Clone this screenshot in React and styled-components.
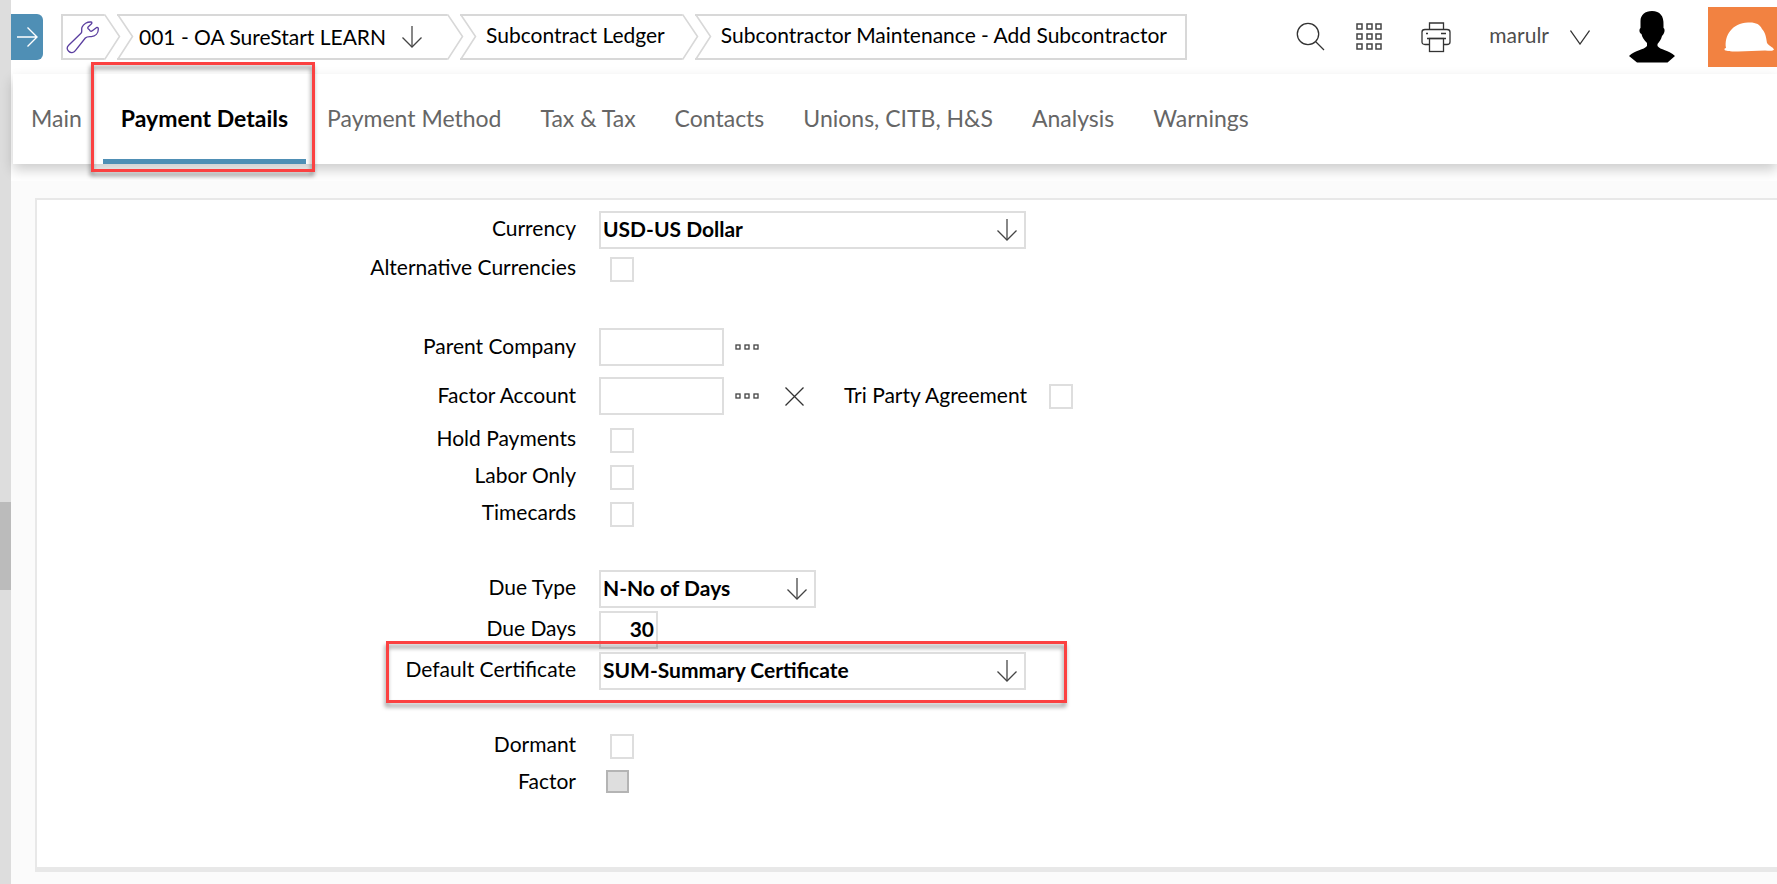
import React from "react";
import styled, { createGlobalStyle, css } from "styled-components";

const GlobalStyle = createGlobalStyle`
  *, *::before, *::after { box-sizing: border-box; }
  body {
    margin: 0;
    background: #fff;
    color: #000;
    font-family: Lato, "Liberation Sans", sans-serif;
    font-size: 21px;
    line-height: 26px;
    overflow-x: hidden;
  }
  button, input, select { font: inherit; color: inherit; }
`;

const Page = styled.div`
  display: flex;
  min-height: 100vh;
`;

const Rail = styled.aside`
  flex: none;
  width: 11px;
  padding-top: 502px;
  background: #ddd;
`;

const RailThumb = styled.div`
  height: 88px;
  background: #bbb;
`;

const Main = styled.div`
  flex: 1;
  min-width: 0;
  display: flex;
  flex-direction: column;
`;

const Header = styled.header`
  display: flex;
  justify-content: space-between;
  height: 74px;
`;

const HeaderLeft = styled.div`
  display: flex;
  align-items: flex-start;
  gap: 18px;
  padding-top: 14px;
`;

const IconButton = styled.button`
  display: flex;
  align-items: center;
  padding: 0;
  border: 0;
  background: none;
`;

const ExpandButton = styled(IconButton)`
  justify-content: center;
  width: 32px;
  height: 46px;
  border-radius: 0 6px 6px 0;
  background: #4f8fb5;
`;

const Crumbs = styled.nav`
  display: flex;
`;

const Crumb = styled.div`
  display: flex;
  height: 46px;
  & + & { margin-left: -4px; }
`;

const CrumbBody = styled.a`
  display: flex;
  align-items: center;
  gap: 16px;
  padding: ${(p) => p.$padding};
  border: 2px solid #d8d8d8;
  border-left-width: ${(p) => (p.$first ? "2px" : 0)};
  border-right-width: ${(p) => (p.$last ? "2px" : 0)};
  color: #000;
  text-decoration: none;
  white-space: nowrap;
`;

const HeaderRight = styled.div`
  display: flex;
  align-items: center;
  height: 74px;
`;

const Tools = styled.div`
  display: flex;
  align-items: center;
  gap: 38px;
  padding-right: 39px;
`;

const ToolPair = styled.div`
  display: flex;
  align-items: center;
  gap: 31px;
  padding-bottom: 1px;
`;

const UserButton = styled(IconButton)`
  gap: 21px;
  color: #4d4d4d;
`;

const UserName = styled.span`
  padding-bottom: 4px;
`;

const Avatar = styled.div`
  display: flex;
  padding-right: 33px;
`;

const Brand = styled.div`
  display: flex;
  align-items: center;
  width: 69px;
  height: 60px;
  padding-left: 16px;
  background: #f28241;
`;

const TabStrip = styled.div`
  padding: 0 0 17px 2px;
`;

const Tabs = styled.nav`
  display: flex;
  gap: 3px;
  height: 90px;
  background: #fff;
  box-shadow: 0 6px 12px rgba(0, 0, 0, 0.2);
`;

const Tab = styled.a`
  position: relative;
  padding: 30px 18px 0;
  border-bottom: 5px solid ${(p) => (p.$active ? "#4f8fb5" : "transparent")};
  color: ${(p) => (p.$active ? "#000" : "#666")};
  font-size: 23px;
  line-height: 28px;
  font-weight: ${(p) => (p.$active ? 700 : 400)};
  text-decoration: none;
  white-space: nowrap;
`;

const Highlight = styled.span`
  position: absolute;
  z-index: 2;
  border: 3px solid #fb4141;
  filter: drop-shadow(-1px 4px 2px rgba(0, 0, 0, 0.4));
  pointer-events: none;
  ${(p) =>
    p.$on === "tab"
      ? css`inset: -12px -9px -13px -12px;`
      : css`top: -11px; bottom: -13px; left: 349px; width: 681px;`}
`;

const Content = styled.main`
  flex: 1;
  display: flex;
  padding: 17px 0 12px 24px;
  background: #fbfbfb;
`;

const Panel = styled.form`
  flex: 1;
  display: flex;
  flex-direction: column;
  gap: 39px;
  padding: 11px 0 20px;
  border: 2px solid #e8e8e8;
  border-width: 2px 0 5px 2px;
  background: #fff;
`;

const Group = styled.div`
  display: flex;
  flex-direction: column;
  gap: 3px;
`;

const Label = styled.label`
  padding-bottom: 4px;
  text-align: right;
  white-space: nowrap;
`;

const rowKinds = {
  field: css`height: 38px;`,
  check: css`height: 34px;`,
  lookup: css`
    height: 46px;
    padding-bottom: 2px;
    ${Label} { padding-bottom: 2px; }
  `,
};

const Row = styled.div`
  position: relative;
  display: grid;
  grid-template-columns: 539px 1fr;
  column-gap: 23px;
  align-items: center;
  ${(p) => rowKinds[p.$kind]}
`;

const Controls = styled.div`
  display: flex;
  align-items: center;
`;

const SelectBox = styled.div`
  display: grid;
  align-items: center;
  width: ${(p) => (p.$wide ? "427px" : "217px")};
  & > * { grid-area: 1 / 1; }
  svg { justify-self: end; margin-right: 9px; pointer-events: none; }
`;

const Select = styled.select`
  appearance: none;
  width: 100%;
  height: 38px;
  padding: 0 40px 2px 2px;
  border: 2px solid #dedede;
  border-radius: 0;
  background: #fff;
  font-weight: 700;
`;

const TextInput = styled.input`
  width: ${(p) => (p.$short ? "59px" : "125px")};
  height: 38px;
  padding: 0 2px 3px;
  border: 2px solid #dedede;
  background: #fff;
  font-weight: 700;
  text-align: ${(p) => (p.$short ? "right" : "left")};
`;

const Checkbox = styled.input`
  appearance: none;
  width: 24px;
  height: 25px;
  margin: 0 0 0 11px;
  border: 2px solid #dedede;
  background: #fff;
  &:disabled {
    width: 23px;
    height: 23px;
    margin: 0 0 4px 7px;
    border-color: #b4b4b4;
    background: #dedede;
  }
`;

const LookupButton = styled(IconButton)`
  margin-left: 11px;
`;

const ClearButton = styled(IconButton)`
  margin-left: 26px;
`;

const InlineLabel = styled(Label)`
  margin: 0 11px 0 40px;
`;

const line = { fill: "none", stroke: "#333", strokeWidth: 1.3 };

const Notch = () => (
  <svg width="17" height="46" fill="none" stroke="#d8d8d8" strokeWidth="1.6">
    <path d="M17 1H1L15.5 22.500L1 45H17" />
    <path d="M0 1H17M0 45H17" strokeWidth="2" />
  </svg>
);

const Tip = () => (
  <svg width="17" height="46" fill="none" stroke="#d8d8d8" strokeWidth="1.6">
    <path d="M0 1H1L15.500 22.500L1 45H0" />
  </svg>
);

const DownArrow = () => (
  <svg width="20" height="22" viewBox="0 0 20 22" fill="none" stroke="#444">
    <path d="M10 0V21" stroke="#888" strokeWidth="2" />
    <path d="M0.500 11.500L10 21L19.500 11.500" strokeWidth="1.3" />
  </svg>
);

const RightArrow = () => (
  <svg width="21" height="20" fill="none" stroke="#fff" strokeWidth="1.4">
    <path d="M0 10H20M10.500 0.500L20 10L10.500 19.500" />
  </svg>
);

const Wrench = () => (
  <svg width="34" height="34" viewBox="0 0 102 102" fill="none" stroke="#5b3fa0" strokeWidth="4" strokeLinejoin="round">
    <path d="M8 76L45 40C50 35 45 31 48 22C52 12 64 5 75 6C79 7 78 10 75 13L67 20C64 23 65 26 69 28L72 32C75 35 78 34 81 31L91 23C94 21 97 23 97 27C97 40 88 49 76 50C68 50 63 49 58 54L28 92C23 99 14 100 8 94C2 88 2 82 8 76Z" />
  </svg>
);

const Search = () => (
  <svg width="29" height="30" {...line}>
    <circle cx="12" cy="12" r="10.700" />
    <path d="M19.500 19.500L28 28" />
  </svg>
);

const Apps = () => (
  <svg width="27" height="28" fill="none" stroke="#444" strokeWidth="1.5">
    {[1, 11, 21].map((y) =>
      [1, 11, 20].map((x) => <rect key={`${x}-${y}`} x={x} y={y} width="5" height="5" />)
    )}
  </svg>
);

const Printer = () => (
  <svg width="30" height="31" {...line}>
    <path d="M8.500 7.500V1H22.500V7.500M8.500 22.500H4Q1 22.500 1 20V10Q1 7.500 4 7.500H26Q29 7.500 29 10V20Q29 22.500 26 22.500H22.500" />
    <rect x="8.500" y="16.500" width="14" height="13" />
    <path d="M6 16.500H25M20 11.500H25M5 11.500H7" />
  </svg>
);

const Chevron = () => (
  <svg width="20" height="15" {...line}>
    <path d="M0.500 0.500L10 14L19.500 0.500" />
  </svg>
);

const Person = () => (
  <svg width="46" height="52" viewBox="0 0 46 52">
    <path d="M23 0C31 0 35 5 34.500 14L34.500 17C36.500 18 35.500 23 33 25C32 29 30 31 28.500 33V35C31 39 40 39 46 45L38.500 51.500H8L0 45C6 39 15 39 18 35V32C15 29 13 26 12.500 23C10 22 10 18 11.500 17V10C11.500 4 16 0 23 0Z" />
  </svg>
);

const HardHat = () => (
  <svg width="50" height="30" viewBox="0 0 50 30" fill="#fff">
    <path d="M2 26C0 14 8 1 24 0.500C31 0 36 2 38 7C41 10 42 14 43 21C45 24 49 25 50 27.500C49 29.500 45 28.500 41 28.500L14 29.500C9 29.500 3 29.500 0.500 28Q0 26 2 26Z" />
  </svg>
);

const Dots = () => (
  <svg width="24" height="6" fill="none" stroke="#444" strokeWidth="1.3">
    {[1, 10, 19].map((x) => <rect key={x} x={x} y="1" width="4" height="4" />)}
  </svg>
);

const Cross = () => (
  <svg width="19" height="19" {...line}>
    <path d="M0.500 0.500L18.500 18.500M18.500 0.500L0.500 18.500" />
  </svg>
);

const tabs = [
  "Main", "Payment Details", "Payment Method", "Tax & Tax",
  "Contacts", "Unions, CITB, H&S", "Analysis", "Warnings",
];

function CheckRow({ id, label, disabled }) {
  return (
    <Row $kind="check">
      <Label htmlFor={id}>{label}</Label>
      <Controls><Checkbox type="checkbox" id={id} disabled={disabled} /></Controls>
    </Row>
  );
}

function SelectRow({ id, label, value, wide, highlighted }) {
  return (
    <Row $kind="field">
      <Label htmlFor={id}>{label}</Label>
      <Controls>
        <SelectBox $wide={wide}>
          <Select id={id}><option>{value}</option></Select>
          <DownArrow />
        </SelectBox>
      </Controls>
      {highlighted && <Highlight $on="row" />}
    </Row>
  );
}

function LookupRow({ id, label, children }) {
  return (
    <Row $kind="lookup">
      <Label htmlFor={id}>{label}</Label>
      <Controls>
        <TextInput id={id} />
        <LookupButton type="button" aria-label={`Find ${label}`}><Dots /></LookupButton>
        {children}
      </Controls>
    </Row>
  );
}

export default function App() {
  return (
    <Page>
      <GlobalStyle />
      <Rail><RailThumb /></Rail>
      <Main>
        <Header>
          <HeaderLeft>
            <ExpandButton aria-label="Expand menu"><RightArrow /></ExpandButton>
            <Crumbs aria-label="Breadcrumb">
              <Crumb>
                <CrumbBody href="#" $first $padding="0 4px 0 3px" aria-label="Settings"><Wrench /></CrumbBody>
                <Tip />
              </Crumb>
              <Crumb>
                <Notch />
                <CrumbBody href="#" $padding="0 25px 0 5px">001 - OA SureStart LEARN <DownArrow /></CrumbBody>
                <Tip />
              </Crumb>
              <Crumb>
                <Notch />
                <CrumbBody href="#" $padding="0 17px 4px 9px">Subcontract Ledger</CrumbBody>
                <Tip />
              </Crumb>
              <Crumb>
                <Notch />
                <CrumbBody href="#" $last $padding="0 18px 4px 9px">Subcontractor Maintenance - Add Subcontractor</CrumbBody>
              </Crumb>
            </Crumbs>
          </HeaderLeft>
          <HeaderRight>
            <Tools>
              <ToolPair>
                <IconButton aria-label="Search"><Search /></IconButton>
                <IconButton aria-label="Apps"><Apps /></IconButton>
              </ToolPair>
              <IconButton aria-label="Print"><Printer /></IconButton>
              <UserButton><UserName>marulr</UserName> <Chevron /></UserButton>
            </Tools>
            <Avatar><Person /></Avatar>
            <Brand><HardHat /></Brand>
          </HeaderRight>
        </Header>
        <TabStrip>
          <Tabs>
            {tabs.map((name) => {
              const active = name === "Payment Details";
              return (
                <Tab key={name} href="#" $active={active}>
                  {name}
                  {active && <Highlight $on="tab" />}
                </Tab>
              );
            })}
          </Tabs>
        </TabStrip>
        <Content>
          <Panel>
            <Group>
              <SelectRow id="currency" label="Currency" value="USD-US Dollar" wide />
              <CheckRow id="alternative" label="Alternative Currencies" />
            </Group>
            <Group>
              <LookupRow id="parent" label="Parent Company" />
              <LookupRow id="account" label="Factor Account">
                <ClearButton type="button" aria-label="Clear Factor Account"><Cross /></ClearButton>
                <InlineLabel htmlFor="triparty">Tri Party Agreement</InlineLabel>
                <Checkbox type="checkbox" id="triparty" />
              </LookupRow>
              <CheckRow id="hold" label="Hold Payments" />
              <CheckRow id="labor" label="Labor Only" />
              <CheckRow id="timecards" label="Timecards" />
            </Group>
            <Group>
              <SelectRow id="duetype" label="Due Type" value="N-No of Days" />
              <Row $kind="field">
                <Label htmlFor="duedays">Due Days</Label>
                <Controls><TextInput id="duedays" $short defaultValue="30" /></Controls>
              </Row>
              <SelectRow id="certificate" label="Default Certificate" value="SUM-Summary Certificate" wide highlighted />
            </Group>
            <Group>
              <CheckRow id="dormant" label="Dormant" />
              <CheckRow id="factor" label="Factor" disabled />
            </Group>
          </Panel>
        </Content>
      </Main>
    </Page>
  );
}
